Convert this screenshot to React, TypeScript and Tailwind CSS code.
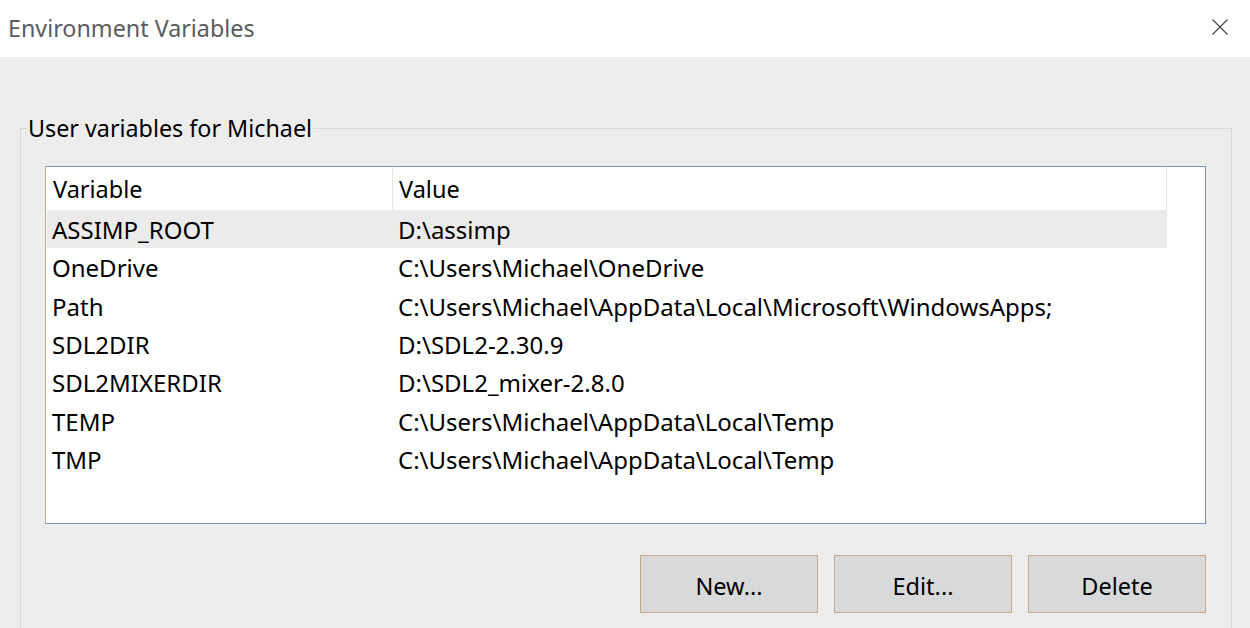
import React from 'react';

const rows = [
  { name: 'ASSIMP_ROOT', value: 'D:\\assimp' },
  { name: 'OneDrive', value: 'C:\\Users\\Michael\\OneDrive' },
  { name: 'Path', value: 'C:\\Users\\Michael\\AppData\\Local\\Microsoft\\WindowsApps;' },
  { name: 'SDL2DIR', value: 'D:\\SDL2-2.30.9' },
  { name: 'SDL2MIXERDIR', value: 'D:\\SDL2_mixer-2.8.0' },
  { name: 'TEMP', value: 'C:\\Users\\Michael\\AppData\\Local\\Temp' },
  { name: 'TMP', value: 'C:\\Users\\Michael\\AppData\\Local\\Temp' },
];

const DialogButton = ({ label }: { label: string }) => (
  <button className="w-[178px] h-[58px] pt-[5px] bg-[#d7d9da] border border-[#c9a987] text-[23.5px] text-black">
    {label}
  </button>
);

export default function App() {
  return (
    <div
      className="w-[1250px] h-[628px] bg-[#ededed] overflow-hidden flex flex-col"
      style={{ fontFamily: '"Segoe UI", "Noto Sans", sans-serif' }}
    >
      <div className="h-[57px] bg-white flex items-center justify-between pl-[8px] pr-[22px] shrink-0">
        <span className="text-[23.3px] text-[#5c5c5c] pb-[1px]">Environment Variables</span>
        <svg width="16" height="16" viewBox="0 0 16 16" className="mt-[-3px]">
          <path d="M0.5 0.5 L15.5 15.5 M15.5 0.5 L0.5 15.5" stroke="#444" strokeWidth="1.2" />
        </svg>
      </div>

      <div className="pt-[59px] pl-[20px]">
        <fieldset className="w-[1212px] h-[600px] border border-[#d9d9d9]">
          <legend className="ml-[6px] px-[1px] text-[23.3px] leading-[24px] text-black">
            User variables for Michael
          </legend>

          <div className="pl-[24px] pr-[25px]">
            <div className="mt-[26px] h-[358px] bg-white border border-[#7d93b5] border-l-[#c9a987] border-r-[#8a8a8a] pl-[1px] pr-[38px]">
              <div className="flex h-[43px] items-center text-[23.5px] text-black">
                <div className="w-[346px] h-full flex items-center pl-[6px] pt-[3px] border-r border-[#e5e5e5]">
                  Variable
                </div>
                <div className="flex-1 h-full flex items-center pl-[6px] pt-[3px] border-r border-[#e5e5e5]">
                  Value
                </div>
              </div>
              {rows.map((row, i) => (
                <div
                  key={row.name}
                  className={`flex h-[38.3px] items-center pt-[2px] text-[24px] text-black ${i === 0 ? 'bg-[#ebebeb]' : ''}`}
                >
                  <div className="w-[346px] pl-[5px]">{row.name}</div>
                  <div className="flex-1 pl-[5px]">{row.value}</div>
                </div>
              ))}
            </div>

            <div className="flex justify-end gap-[16px] mt-[31px]">
              <DialogButton label="New..." />
              <DialogButton label="Edit..." />
              <DialogButton label="Delete" />
            </div>
          </div>
        </fieldset>
      </div>
    </div>
  );
}
